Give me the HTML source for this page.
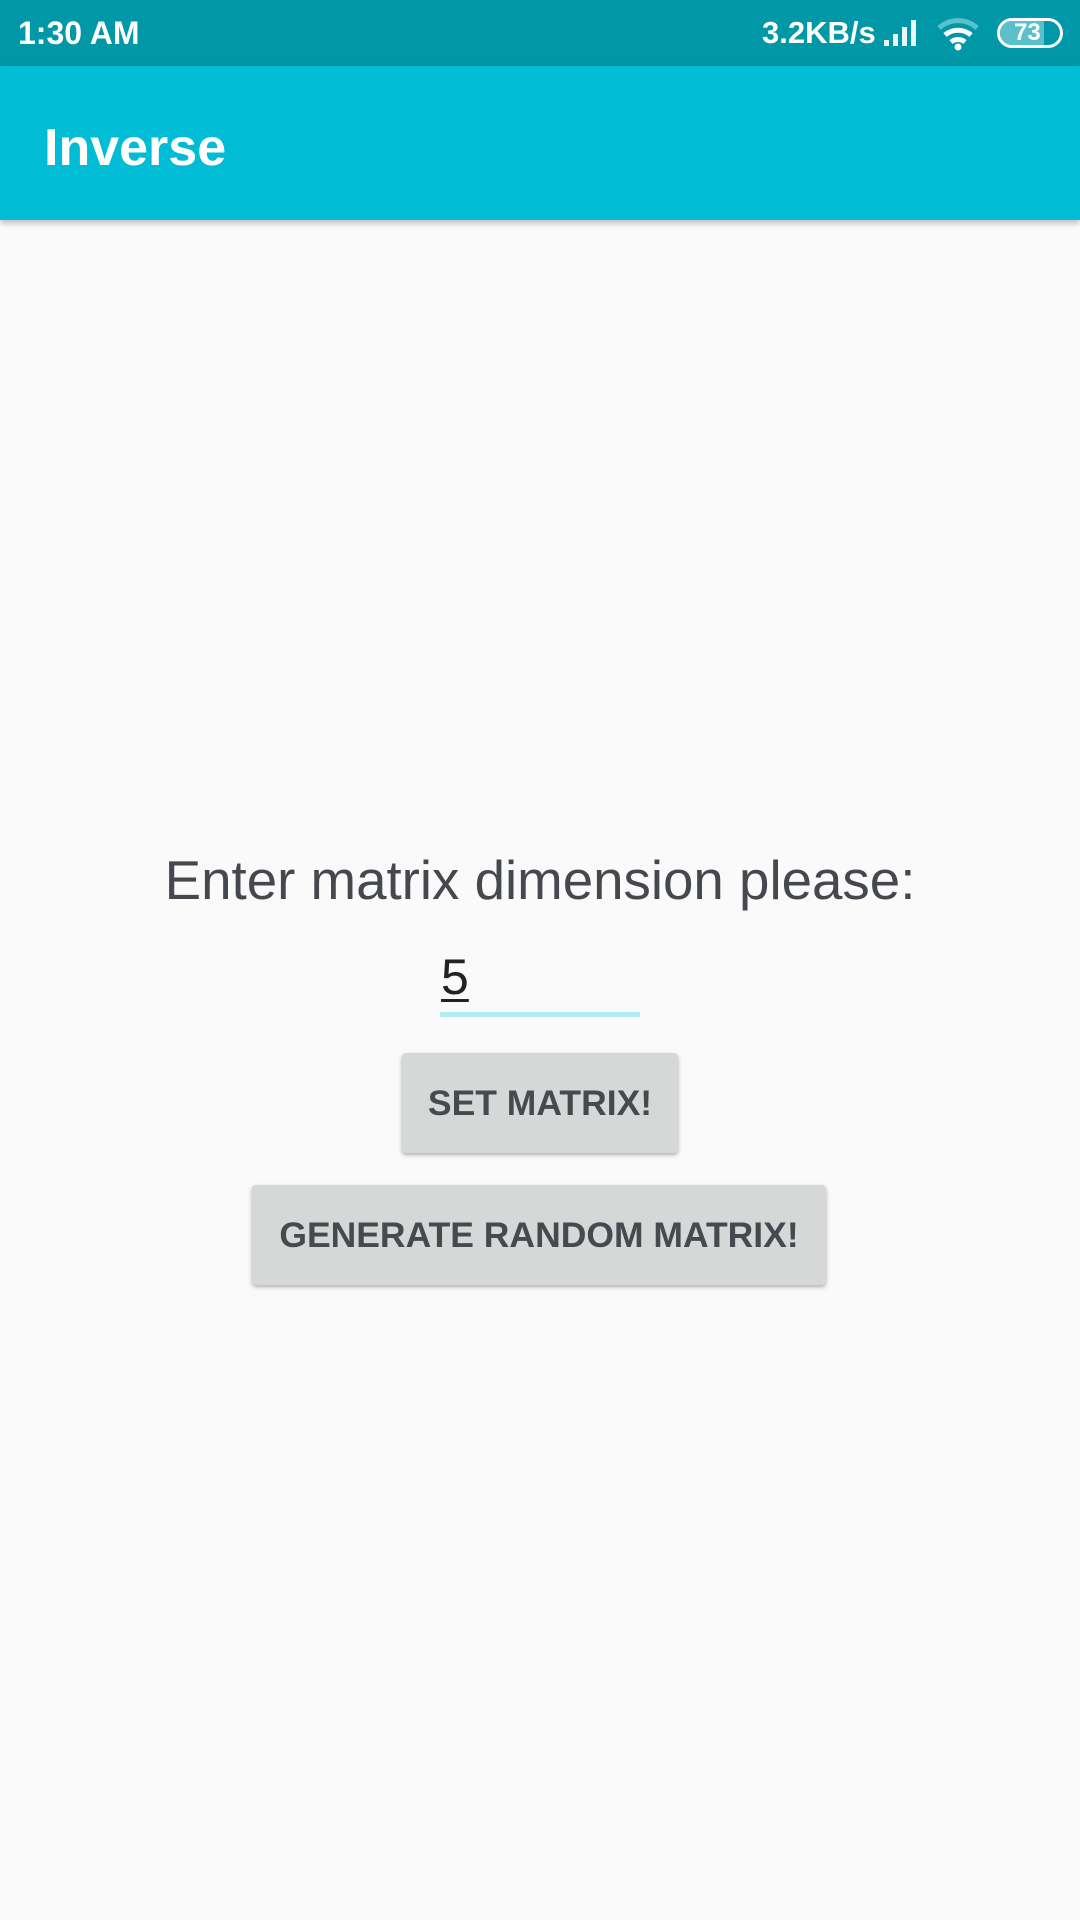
<!DOCTYPE html>
<html><head><meta charset="utf-8"><style>
*{margin:0;padding:0;box-sizing:border-box}
body{width:1080px;height:1920px;background:#fafafa;font-family:"Liberation Sans",sans-serif;position:relative;overflow:hidden}
.sb{position:absolute;left:0;top:0;width:1080px;height:66px;background:#0097a7;color:#fff}
.ab{position:absolute;left:0;top:66px;width:1080px;height:154px;background:#00bcd4;box-shadow:0 3px 6px rgba(0,0,0,.25)}
.t{position:absolute;white-space:nowrap}
.btn{position:absolute;background:#d6d7d7;border-radius:4px;box-shadow:0 2px 4px rgba(0,0,0,.3);color:#464a4f;font-size:35.5px;font-weight:bold;text-align:center;line-height:100px}
</style></head><body>
<div class="sb">
 <div class="t" style="left:18px;top:15px;font-size:32px;font-weight:bold">1:30 AM</div>
 <div class="t" style="left:762px;top:15px;font-size:31px;font-weight:bold">3.2KB/s</div>
 <svg style="position:absolute;left:882px;top:16px" width="44" height="32"><rect x="2" y="24" width="5" height="6" fill="#e8f7f8"/><rect x="11" y="18" width="5" height="12" fill="#e8f7f8"/><rect x="20" y="11" width="5" height="19" fill="#e8f7f8"/><rect x="29" y="4" width="5" height="26" fill="#e8f7f8"/></svg>
 <svg style="position:absolute;left:936px;top:16px" width="46" height="36"><path d="M3 12 A28 28 0 0 1 41 12" stroke="#5cc0cb" stroke-width="5" fill="none"/><path d="M9 19 A20 20 0 0 1 35 19" stroke="#fff" stroke-width="5" fill="none"/><path d="M15 26 A11 11 0 0 1 29 26" stroke="#fff" stroke-width="5" fill="none"/><circle cx="22" cy="31" r="3.5" fill="#fff"/></svg>
 <div style="position:absolute;left:997px;top:18px;width:66px;height:30px;border:3px solid #fff;border-radius:15px;overflow:hidden"><div style="width:44px;height:100%;background:#5cc0cb"></div><div class="t" style="left:14px;top:-2px;font-size:24px;font-weight:bold;color:#fff">73</div></div>
</div>
<div class="ab"><div class="t" style="left:44px;top:52px;font-size:52px;font-weight:bold;color:#fff">Inverse</div></div>
<div class="t" style="left:0;width:1080px;text-align:center;top:848px;font-size:54.7px;color:#45484d">Enter matrix dimension please:</div>
<div class="t" style="left:441px;top:948px;font-size:50px;color:#222;text-decoration:underline;text-decoration-thickness:3px;text-underline-offset:5px">5</div>
<div style="position:absolute;left:440px;top:1012px;width:200px;height:5px;background:#b2ebf2"></div>
<div class="btn" style="left:402px;top:1053px;width:276px;height:100px">SET MATRIX!</div>
<div class="btn" style="left:252px;top:1185px;width:574px;height:100px">GENERATE RANDOM MATRIX!</div>
</body></html>
